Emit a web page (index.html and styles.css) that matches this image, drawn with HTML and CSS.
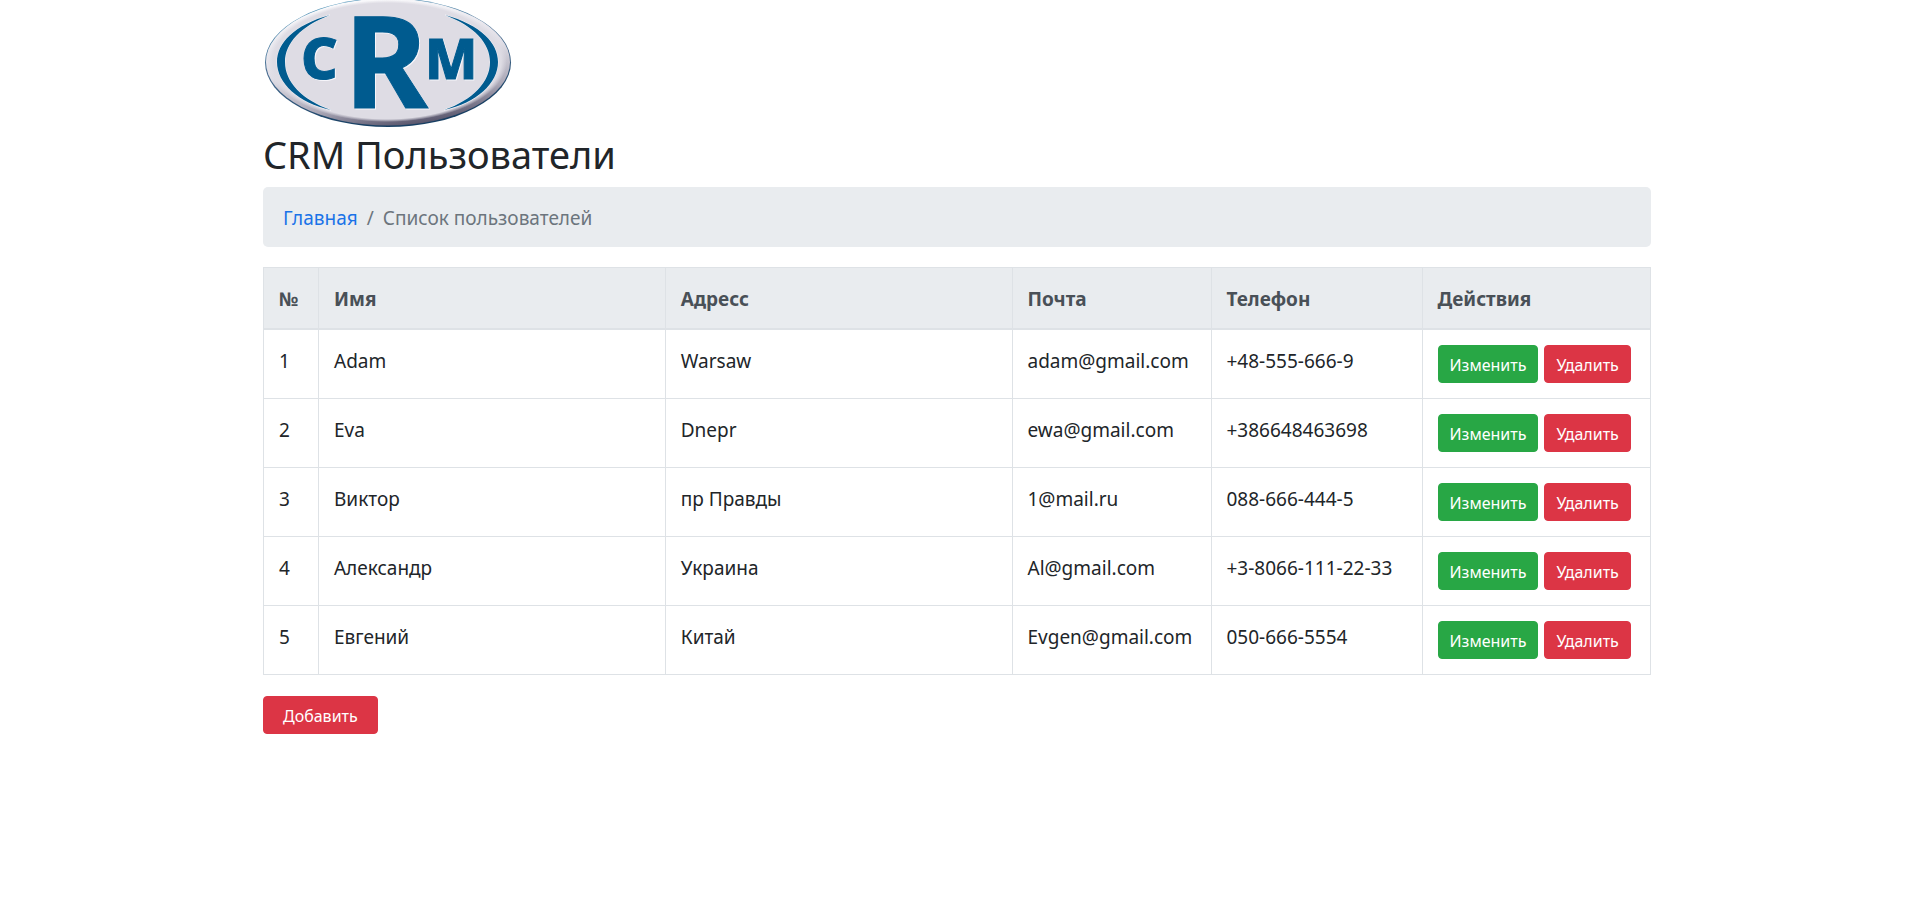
FILE: index.html
```html
<!DOCTYPE html>
<html lang="ru">
<head>
<meta charset="utf-8">
<title>CRM Пользователи</title>
<link rel="stylesheet" href="styles.css">
</head>
<body>
<div class="container">
  <header>
    <svg class="logo" viewBox="0 0 250 129" role="img" aria-label="CRM">
      <defs>
        <linearGradient id="rim" x1="0" y1="0" x2="0.35" y2="1">
          <stop offset="0" stop-color="#4f9fc4"/>
          <stop offset="0.5" stop-color="#4a6e92"/>
          <stop offset="1" stop-color="#173f63"/>
        </linearGradient>
        <linearGradient id="bevel" x1="0.3" y1="0" x2="0.6" y2="1">
          <stop offset="0" stop-color="#fbfbfd"/>
          <stop offset="0.5" stop-color="#e0dee6"/>
          <stop offset="0.8" stop-color="#aaa7b6"/>
          <stop offset="1" stop-color="#56536a"/>
        </linearGradient>
        <radialGradient id="face">
          <stop offset="0.95" stop-color="#dedce4"/>
          <stop offset="1" stop-color="#dedce4" stop-opacity="0"/>
        </radialGradient>
      </defs>
      <ellipse cx="125" cy="62.500" rx="123" ry="64.500" fill="url(#rim)"/>
      <ellipse cx="125" cy="62" rx="122" ry="63.500" fill="url(#bevel)"/>
      <ellipse cx="124" cy="61" rx="120" ry="61" fill="url(#face)"/>
      <g class="arcs">
        <path d="M67 15C31 25 14 43 14 62C14 83 35 103 68 110C39 100 22 82 22 62C22 43 38 26 67 15Z"/>
        <path d="M182 15C218 25 235 43 235 62C235 83 214 103 181 110C210 100 227 82 227 62C227 43 211 26 182 15Z"/>
      </g>
      <g class="letters">
        <text x="38" y="79" font-size="57">C</text>
        <text class="middle" x="81" y="108" font-size="128">R</text>
        <text x="162" y="79" font-size="55">M</text>
      </g>
    </svg>
    <h1 class="title">CRM Пользователи</h1>
  </header>
  <nav aria-label="Навигация">
    <ol class="breadcrumb">
      <li><a href="#">Главная</a></li>
      <li class="current" aria-current="page">Список пользователей</li>
    </ol>
  </nav>
  <table class="users">
    <colgroup>
      <col class="col-id"><col class="col-name"><col class="col-address"><col class="col-mail"><col class="col-phone"><col>
    </colgroup>
    <thead>
      <tr><th>№</th><th>Имя</th><th>Адресс</th><th>Почта</th><th>Телефон</th><th>Действия</th></tr>
    </thead>
    <tbody>
      <tr><td>1</td><td>Adam</td><td>Warsaw</td><td>adam@gmail.com</td><td>+48-555-666-9</td><td><div class="actions"><button class="btn edit">Изменить</button><button class="btn delete">Удалить</button></div></td></tr>
      <tr><td>2</td><td>Eva</td><td>Dnepr</td><td>ewa@gmail.com</td><td>+386648463698</td><td><div class="actions"><button class="btn edit">Изменить</button><button class="btn delete">Удалить</button></div></td></tr>
      <tr><td>3</td><td>Виктор</td><td>пр Правды</td><td>1@mail.ru</td><td>088-666-444-5</td><td><div class="actions"><button class="btn edit">Изменить</button><button class="btn delete">Удалить</button></div></td></tr>
      <tr><td>4</td><td>Александр</td><td>Украина</td><td>Al@gmail.com</td><td>+3-8066-111-22-33</td><td><div class="actions"><button class="btn edit">Изменить</button><button class="btn delete">Удалить</button></div></td></tr>
      <tr><td>5</td><td>Евгений</td><td>Китай</td><td>Evgen@gmail.com</td><td>050-666-5554</td><td><div class="actions"><button class="btn edit">Изменить</button><button class="btn delete">Удалить</button></div></td></tr>
    </tbody>
  </table>
  <button class="btn delete add">Добавить</button>
</div>
</body>
</html>
```
FILE: styles.css
```css
* { box-sizing: border-box; }
body {
  margin: 0;
  background: #fff;
  color: #212529;
  font: 19px/32px "Noto Sans", sans-serif;
}
.container {
  max-width: 1425px;
  margin: 0 auto;
  padding: 0 17px 0 20px;
}
.logo { display: block; width: 250px; }
.arcs, .letters { fill: #005b8f; }
.arcs { stroke: #f4f3f8; stroke-width: 1px; paint-order: stroke; }
.letters {
  stroke: #005b8f;
  stroke-width: 1px;
  font-family: "Noto Sans", sans-serif;
  font-weight: 800;
  filter: drop-shadow(1px 1px 0 #f6f5fa);
}
.middle { font-weight: 700; }
.title {
  margin: 0;
  padding: 1px 0 9px;
  font-size: 38px;
  font-weight: 400;
  line-height: 48px;
}
.breadcrumb {
  display: flex;
  flex-wrap: wrap;
  margin: 0 0 20px;
  padding: 15px 20px 13px;
  list-style: none;
  background: #e9ecef;
  border-radius: 5px;
}
.breadcrumb a { color: #1a73e8; text-decoration: none; }
.current { color: #6c757d; }
.current::before { content: "/"; padding: 0 9px; }
.users {
  width: 100%;
  margin-bottom: 21px;
  table-layout: fixed;
  border-collapse: collapse;
}
.users th, .users td {
  padding: 15px;
  border: 1px solid #dee2e6;
  text-align: left;
  vertical-align: top;
}
.users th {
  padding-bottom: 13px;
  background: #e9ecef;
  border-bottom-width: 2px;
  color: #495057;
  font-weight: 700;
}
.col-id { width: 55px; }
.col-name, .col-address { width: 25%; }
.col-mail { width: 199px; }
.col-phone { width: 211px; }
.actions { display: flex; gap: 6px; }
.btn {
  padding: 5px 11px 3px;
  border: 1px solid;
  border-radius: 4px;
  color: #fff;
  font: inherit;
  font-size: 16px;
  line-height: 28px;
  white-space: nowrap;
  cursor: pointer;
}
.edit { background: #28a745; border-color: #28a745; }
.delete { background: #dc3545; border-color: #dc3545; }
.add { padding: 5px 19px 3px; }
```
